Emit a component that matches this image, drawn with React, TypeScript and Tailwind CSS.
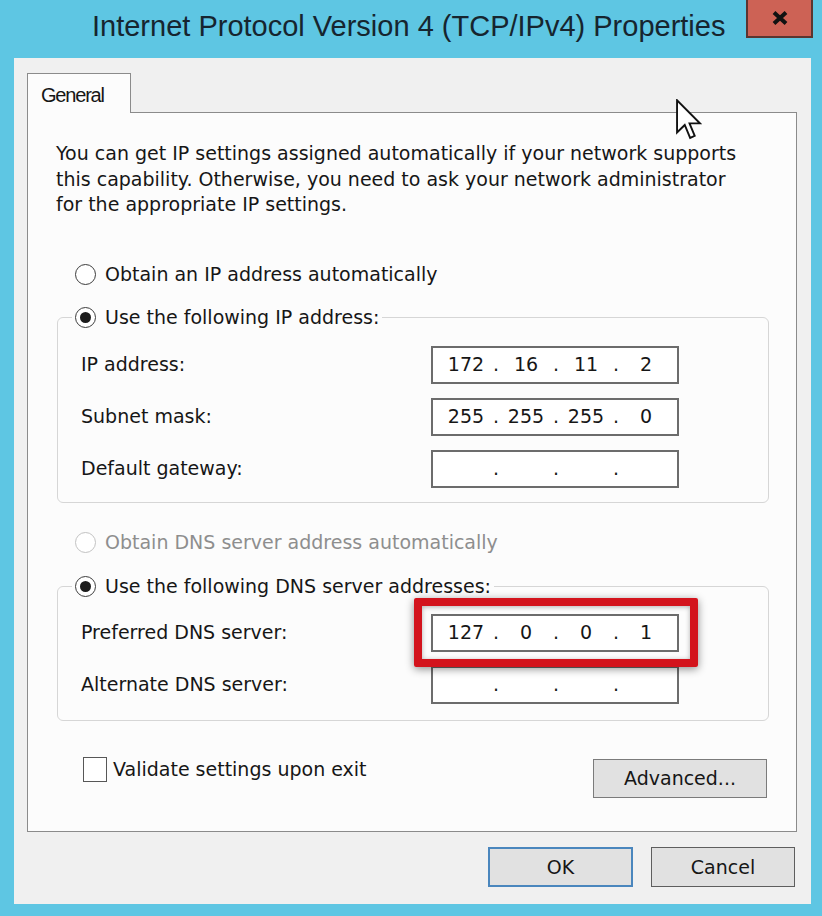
import React from "react";

function Radio({ checked, disabled }: { checked?: boolean; disabled?: boolean }) {
  return (
    <span
      className={
        disabled
          ? "flex items-center justify-center w-[21px] h-[21px] rounded-full border border-[#c2c2c2] bg-white shrink-0"
          : "flex items-center justify-center w-[21px] h-[21px] rounded-full border border-[#3c3c3c] bg-white shrink-0"
      }
    >
      {checked && <span className="w-[11px] h-[11px] rounded-full bg-[#1c1c1c]" />}
    </span>
  );
}

function RadioRow({
  label,
  checked,
  disabled,
}: {
  label: string;
  checked?: boolean;
  disabled?: boolean;
}) {
  return (
    <div className="flex items-center h-[26px] gap-[9px]">
      <Radio checked={checked} disabled={disabled} />
      <span className={disabled ? "text-[#8e8e8e] whitespace-nowrap" : "whitespace-nowrap"}>{label}</span>
    </div>
  );
}

function IpField({ values }: { values: string[] }) {
  return (
    <div className="flex items-center w-[248px] h-[38px] border-2 border-[#6c6c6c] bg-white pl-[7px] shrink-0">
      {values.map((v, i) => (
        <React.Fragment key={i}>
          <span className="w-[52px] text-center">{v}</span>
          {i < 3 && <span className="w-[8px] text-center">.</span>}
        </React.Fragment>
      ))}
    </div>
  );
}

function FieldRow({ label, values }: { label: string; values: string[] }) {
  return (
    <div className="flex items-center h-[38px]">
      <span className="w-[350px] whitespace-nowrap">{label}</span>
      <IpField values={values} />
    </div>
  );
}

export default function App() {
  return (
    <div className="relative w-[822px] h-[916px] overflow-hidden bg-[#5ec6e3] font-['DejaVu_Sans',sans-serif] text-[19px] text-[#161616]">
      {/* Title bar */}
      <div className="flex h-[58px]">
        <div className="pl-[92px] font-['Liberation_Sans',Arial,sans-serif] text-[29px] leading-[53px] text-[#16252f] whitespace-nowrap">
          Internet Protocol Version 4 (TCP/IPv4) Properties
        </div>
        <div className="ml-auto mr-[9px] w-[67px] h-[38px] bg-[#cd6255] border-2 border-t-0 border-[#5b3530] flex items-center justify-center">
          <svg width="16" height="14" viewBox="0 0 16 14">
            <path d="M2 1.5 L14 12.5 M14 1.5 L2 12.5" stroke="#111" strokeWidth="4" strokeLinecap="butt" />
          </svg>
        </div>
      </div>

      {/* Dialog body */}
      <div className="ml-[14px] w-[797px] h-[846px] bg-[#f0f0f0] flex flex-col">
        {/* Tab strip */}
        <div className="pt-[15px] pl-[13px] flex">
          <div className="relative z-10 -mb-px w-[104px] h-[40px] bg-[#fcfcfc] border border-b-0 border-[#8b8b8b] pl-[13px] pt-[9px] font-['Liberation_Sans',Arial,sans-serif] text-[20px] leading-[24px] tracking-[-1.2px]">
            General
          </div>
        </div>

        {/* Tab content */}
        <div className="ml-[13px] w-[770px] h-[720px] bg-[#fcfcfc] border border-[#8b8b8b] px-[28px] pt-[28px]">
          <div className="leading-[25.5px] whitespace-nowrap">
            <div>You can get IP settings assigned automatically if your network supports</div>
            <div>this capability. Otherwise, you need to ask your network administrator</div>
            <div>for the appropriate IP settings.</div>
          </div>

          <div className="mt-[44px] pl-[19px]">
            <RadioRow label="Obtain an IP address automatically" />
          </div>

          <fieldset className="mt-[17px] ml-[1px] mr-[-1px] border border-[#d6d6d6] rounded-[6px]">
            <legend className="ml-[14px] px-[3px]">
              <RadioRow label="Use the following IP address:" checked />
            </legend>
            <div className="mt-[15px] pl-[23px] pb-[14px] flex flex-col gap-[14px]">
              <FieldRow label="IP address:" values={["172", "16", "11", "2"]} />
              <FieldRow label="Subnet mask:" values={["255", "255", "255", "0"]} />
              <FieldRow label="Default gateway:" values={["", "", "", ""]} />
            </div>
          </fieldset>

          <div className="mt-[27px] pl-[19px]">
            <RadioRow label="Obtain DNS server address automatically" disabled />
          </div>

          <fieldset className="mt-[18px] ml-[1px] mr-[-1px] border border-[#d6d6d6] rounded-[6px]">
            <legend className="ml-[14px] px-[3px]">
              <RadioRow label="Use the following DNS server addresses:" checked />
            </legend>
            <div className="mt-[14px] pl-[23px] pb-[16px] flex flex-col gap-[14px]">
              <FieldRow label="Preferred DNS server:" values={["127", "0", "0", "1"]} />
              <FieldRow label="Alternate DNS server:" values={["", "", "", ""]} />
            </div>
          </fieldset>

          <div className="mt-[36px] pl-[27px] pr-[1px] flex items-start justify-between">
            <div className="flex items-center h-[25px] gap-[6px]">
              <span className="w-[24px] h-[25px] border-[1.5px] border-[#575757] bg-white" />
              <span className="whitespace-nowrap">Validate settings upon exit</span>
            </div>
            <div className="mt-[2px] w-[174px] h-[39px] bg-[#e1e1e1] border border-[#7b7b7b] flex items-center justify-center">
              Advanced...
            </div>
          </div>
        </div>

        {/* Bottom buttons */}
        <div className="mt-[15px] pr-[16px] flex justify-end gap-[18px]">
          <div className="w-[145px] h-[40px] bg-[#e1e1e1] border-2 border-[#4a86bd] flex items-center justify-center">
            OK
          </div>
          <div className="w-[144px] h-[40px] bg-[#e1e1e1] border border-[#5e5e5e] flex items-center justify-center">
            Cancel
          </div>
        </div>
      </div>

      {/* Red highlight annotation */}
      <div className="absolute left-[414px] top-[598px] w-[284px] h-[69px] border-[8px] border-[#d3131c] rounded-[2px] shadow-[0_2px_8px_rgba(0,0,0,0.45),inset_0_1px_5px_rgba(0,0,0,0.3)]" />

      {/* Mouse cursor */}
      <svg className="absolute left-[676px] top-[99px]" width="26" height="42" viewBox="0 0 12.5 20">
        <path
          d="M0.5 0.5 L0.5 16 L4.2 12.4 L6.8 18.6 L9 17.6 L6.5 11.6 L11.5 11.6 Z"
          fill="#ffffff"
          stroke="#111111"
          strokeWidth="0.9"
          strokeLinejoin="miter"
        />
      </svg>
    </div>
  );
}
